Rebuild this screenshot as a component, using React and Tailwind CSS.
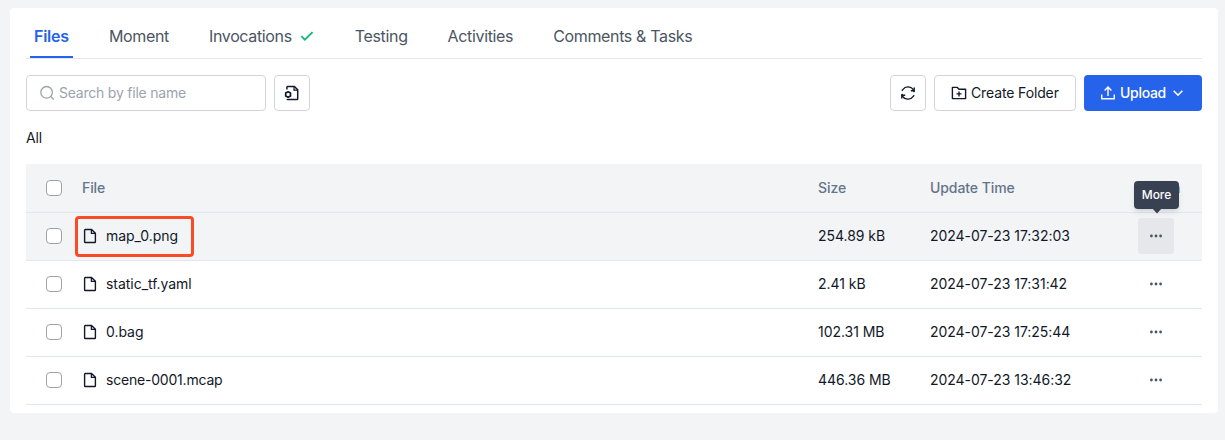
const files = [
  { name: "map_0.png", size: "254.89 kB", time: "2024-07-23 17:32:03", active: true },
  { name: "static_tf.yaml", size: "2.41 kB", time: "2024-07-23 17:31:42" },
  { name: "0.bag", size: "102.31 MB", time: "2024-07-23 17:25:44" },
  { name: "scene-0001.mcap", size: "446.36 MB", time: "2024-07-23 13:46:32" },
];

const tabs = ["Files", "Moment", "Invocations", "Testing", "Activities", "Comments & Tasks"];

function Svg({ children, className = "", box = 16, width = 1.4 }) {
  return (
    <svg
      className={`h-4 w-4 shrink-0 ${className}`}
      viewBox={`0 0 ${box} ${box}`}
      fill="none"
      stroke="currentColor"
      strokeWidth={width}
    >
      {children}
    </svg>
  );
}

const FileIcon = () => (
  <Svg>
    <path d="M9.6 1.5H3.4a.8.8 0 0 0-.8.8v11.4a.8.8 0 0 0 .8.8h9.2a.8.8 0 0 0 .8-.8V5.3z" strokeLinejoin="round" />
    <path d="M9.4 1.8v3.6h3.7" strokeWidth="1.3" />
  </Svg>
);

const FileCogIcon = () => (
  <Svg width={1.5}>
    <path d="M2.9 4.4V2.3a.8.8 0 0 1 .8-.8h6.7l3.3 3.3v8.9a.8.8 0 0 1-.8.8H3.7a.8.8 0 0 1-.7-.5" strokeLinejoin="round" />
    <path d="M10 1.8v3.4h3.5" strokeWidth="1.2" />
    <path d="M4.1 6.8l2.4 1.3v2.8l-2.4 1.3-2.4-1.3V8.1z" strokeWidth="1.7" strokeLinejoin="round" />
  </Svg>
);

const Dots = () => (
  <svg className="h-4 w-4" viewBox="0 0 16 16" fill="currentColor">
    <circle cx="3.4" cy="8" r="1.4" />
    <circle cx="8" cy="8" r="1.4" />
    <circle cx="12.6" cy="8" r="1.4" />
  </svg>
);

const Checkbox = () => (
  <span className="block h-4 w-4 rounded border border-[#9ca3af] bg-white" />
);

const columns = "grid grid-cols-[56px_736px_112px_208px_1fr] items-center";

export default function App() {
  return (
    <div className="h-[440px] w-[1225px] bg-[#f3f4f6] pt-2 pl-[10px] font-['Inter',sans-serif] text-sm text-[#111827]">
      <main className="h-[405px] w-[1208px] rounded bg-white px-4">
        <nav className="flex h-[51px] gap-8 border-b border-[#e2e8f0] pl-1 text-base tracking-[-0.35px] text-[#4b5563]">
          {tabs.map((tab, i) => (
            <button
              key={tab}
              className={
                i === 0
                  ? "flex h-[50px] w-[43px] items-center border-b-2 border-[#2563eb] px-1 pt-2 font-semibold tracking-[-0.25px] text-[#2563eb]"
                  : "flex h-[50px] items-center border-b-2 border-transparent px-1 pt-2 whitespace-nowrap"
              }
            >
              {tab}
              {tab === "Invocations" && (
                <Svg className="ml-[7px] text-[#10b981]" width={1.9}>
                  <path d="M2.3 8.2l3.5 3.5 7.8-7.6" />
                </Svg>
              )}
            </button>
          ))}
        </nav>

        <div className="mt-4 flex h-9 items-center gap-2">
          <label className="flex h-9 w-60 items-center gap-1 rounded border border-[#d1d5db] px-3 text-[#9ca3af]">
            <Svg width={1.3}>
              <circle cx="7.6" cy="7.3" r="5.8" />
              <path d="M11.8 11.5l3 3" />
            </Svg>
            <span className="tracking-[-0.22px]">Search by file name</span>
          </label>
          <button className="flex h-9 w-9 items-center justify-center rounded border border-[#d1d5db]">
            <FileCogIcon />
          </button>
          <div className="ml-auto flex gap-2">
            <button className="flex h-9 w-9 items-center justify-center rounded border border-[#d1d5db]">
              <Svg>
                <path d="M14.1 7.2A6.2 6.2 0 0 0 3 4.4L1.8 5.8M1.9 8.8A6.2 6.2 0 0 0 13 11.6l1.2-1.4" />
                <path d="M14.2 2.4v3.4h-3.4M1.8 13.6v-3.4h3.4" />
              </Svg>
            </button>
            <button className="flex h-9 w-[142px] items-center gap-1 rounded border border-[#d1d5db] pl-4 tracking-[-0.13px] whitespace-nowrap">
              <Svg>
                <path d="M1.4 2.4h4.9l1.8 1.9h6.5v9.3H1.4z" strokeLinejoin="round" />
                <path d="M8 6.4v5M5.5 8.9h5" />
              </Svg>
              Create Folder
            </button>
            <button className="flex h-9 w-[118px] items-center rounded bg-[#2563eb] pl-4 font-medium tracking-[-0.3px] text-white">
              <Svg className="mr-1" width={1.4}>
                <path d="M8 11V2.2M4.6 5.5L8 2.1l3.4 3.4M1.7 9.6v4.2h12.6V9.6" />
              </Svg>
              Upload
              <Svg className="ml-1" width={1.5}>
                <path d="M3.6 5.7L8 10.1l4.4-4.4" />
              </Svg>
            </button>
          </div>
        </div>

        <div className="mt-[17px] h-5 leading-5 tracking-[-0.1px]">All</div>

        <section className="mt-4">
          <div className={`${columns} h-[49px] border-b border-[#dfe8f1] bg-[#f3f4f6] font-medium tracking-[-0.08px] text-[#64748b]`}>
            <div className="pl-5"><Checkbox /></div>
            <div>File</div>
            <div>Size</div>
            <div>Update Time</div>
            <div className="tracking-[-0.12px]">Action</div>
          </div>
          {files.map((f) => (
            <div
              key={f.name}
              className={`${columns} h-12 border-b border-[#e2e8f0] pb-px tracking-[-0.04px] ${f.active ? "bg-[#f3f4f6]" : "bg-white"}`}
            >
              <div className="pl-5"><Checkbox /></div>
              <div className="relative flex items-center gap-2">
                {f.active && (
                  <span className="absolute -top-[10px] -left-[7px] h-[41px] w-[119px] rounded-[4px] border-3 border-[#f94b26]" />
                )}
                <FileIcon />
                <span className={f.name.startsWith("scene") ? "tracking-[-0.2px]" : ""}>{f.name}</span>
              </div>
              <div>{f.size}</div>
              <div>{f.time}</div>
              <div
                className={`relative flex h-9 w-9 items-center justify-center rounded text-[#4b5563] ${
                  f.active ? "bg-[#e5e7eb]" : ""
                }`}
              >
                <Dots />
                {f.active && (
                  <span className="absolute -top-[37px] -left-1 flex h-7 w-[45px] items-center justify-center rounded bg-[#374151] text-xs font-medium text-white shadow-md">
                    More
                    <svg className="absolute top-[27px] left-[18px] h-[6px] w-[10px]" viewBox="0 0 10 6" fill="#374151">
                      <path d="M0 0h10L5 5.5z" />
                    </svg>
                  </span>
                )}
              </div>
            </div>
          ))}
        </section>
      </main>
    </div>
  );
}
